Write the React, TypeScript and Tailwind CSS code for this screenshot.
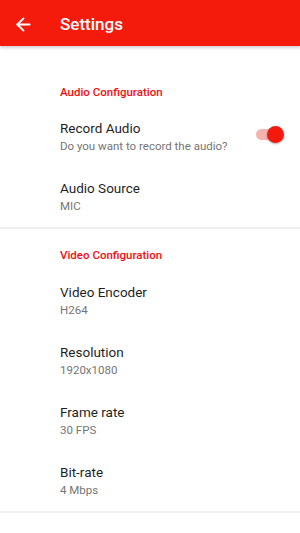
import { ArrowLeft } from 'lucide-react'

type Item = { title: string; summary: string; toggle?: boolean }

const sections: { heading: string; items: Item[] }[] = [
  {
    heading: 'Audio Configuration',
    items: [
      { title: 'Record Audio', summary: 'Do you want to record the audio?', toggle: true },
      { title: 'Audio Source', summary: 'MIC' },
    ],
  },
  {
    heading: 'Video Configuration',
    items: [
      { title: 'Video Encoder', summary: 'H264' },
      { title: 'Resolution', summary: '1920x1080' },
      { title: 'Frame rate', summary: '30 FPS' },
      { title: 'Bit-rate', summary: '4 Mbps' },
    ],
  },
]

function Toggle() {
  return (
    <div className="relative -mt-[6px] h-[18px] w-[30px] shrink-0">
      <div className="absolute left-[2px] top-[4px] h-[11px] w-[26px] rounded-full bg-[#f9b3ae]" />
      <div className="absolute right-0 top-[1px] h-[17px] w-[17px] rounded-full bg-[#f3190d] shadow-[0_1px_2px_rgba(0,0,0,0.35)]" />
    </div>
  )
}

export default function App() {
  return (
    <div
      className="flex min-h-[533px] w-[300px] flex-col bg-white"
      style={{ fontFamily: 'Roboto, "Noto Sans", sans-serif' }}
    >
      <header className="relative z-10 flex h-[46px] shrink-0 items-center bg-[#f41b0d] pt-[3px] shadow-[0_2px_3px_rgba(0,0,0,0.18)]">
        <div className="flex w-[60px] pl-[13px]">
          <ArrowLeft size={21} strokeWidth={2.2} className="text-white" />
        </div>
        <h1 className="text-[17px] font-medium text-white">Settings</h1>
      </header>

      <main className="pt-[16px]">
        {sections.map((section, i) => (
          <section key={section.heading} className="border-b-[2px] border-[#efefef]">
            <h2
              className={`pl-[60px] text-[11.5px] font-medium leading-[14px] text-[#f40d0d] ${
                i === 0 ? 'pt-[23px] pb-[8px]' : 'pt-[19px] pb-[9px]'
              }`}
            >
              {section.heading}
            </h2>
            {section.items.map((item) => (
              <div key={item.title} className="flex h-[60px] items-center pl-[60px] pr-[16px]">
                <div className="flex-1">
                  <p className="text-[13.5px] leading-[17px] text-[#1f1f1f]">{item.title}</p>
                  <p className="text-[11.5px] leading-[18px] text-[#757575]">{item.summary}</p>
                </div>
                {item.toggle && <Toggle />}
              </div>
            ))}
          </section>
        ))}
      </main>
    </div>
  )
}
